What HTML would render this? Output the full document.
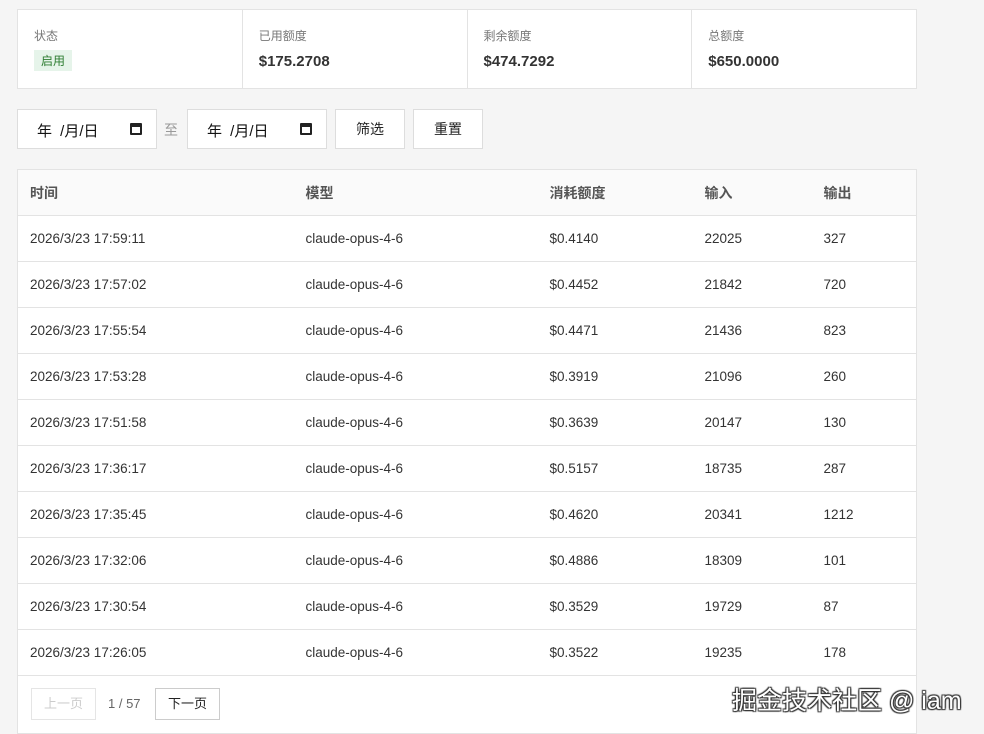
<!DOCTYPE html>
<html><head><meta charset="utf-8"><style>
*{box-sizing:border-box;margin:0;padding:0}
body{width:984px;height:734px;background:#f5f5f5;font-family:"Liberation Sans","Noto Sans CJK SC",sans-serif;color:#333;position:relative;overflow:hidden}
.stats{position:absolute;left:17px;top:9px;width:900px;height:80px;background:#fff;border:1px solid #e3e3e3;display:flex}
.stats>div{flex:1;border-right:1px solid #e3e3e3;padding:17px 16px}
.stats>div:last-child{border-right:none}
.lbl{font-size:12px;color:#777}
.val{font-size:15px;font-weight:bold;color:#333;margin-top:9px}
.badge{display:inline-block;margin-top:6px;background:#e6f4ea;color:#2e7d32;font-size:12px;padding:2px 7px}
.inp{position:absolute;top:109px;height:40px;background:#fff;border:1px solid #ddd;font-size:15px;color:#111;padding:10px 0 0 19px;word-spacing:4px}
.inp .cal{position:absolute;right:14px;top:13px;width:12px;height:12px;border:2px solid #222;border-top-width:4px;border-radius:1px}
.btn{position:absolute;top:109px;height:40px;background:#fff;border:1px solid #ddd;font-size:14px;text-align:center;line-height:38px;color:#222}
table{position:absolute;left:17px;top:169px;width:900px;border-collapse:collapse;background:#fff;border:1px solid #e3e3e3;font-size:13.5px}
th{background:#fafafa;height:46px;text-align:left;font-weight:bold;color:#555;font-size:14px;border-bottom:1px solid #e3e3e3}
td{height:46px;border-bottom:1px solid #e3e3e3;color:#333}
th,td{padding-left:12px}
.foot{position:absolute;left:17px;top:676px;width:900px;height:58px;background:#fff;border:1px solid #e3e3e3;border-top:none}
.pb{position:absolute;top:12px;height:32px;border:1px solid #ccc;font-size:13px;line-height:30px;text-align:center;background:#fff}
.wm{position:absolute;left:732px;top:681px;font-size:25px;color:#fff;text-shadow:0 0 1px #333,1px 1px 1px #333,-1px -1px 1px #333,1px -1px 1px #333,-1px 1px 1px #333}
</style></head><body>
<div class="stats">
<div><div class="lbl">状态</div><span class="badge">启用</span></div>
<div><div class="lbl">已用额度</div><div class="val">$175.2708</div></div>
<div><div class="lbl">剩余额度</div><div class="val">$474.7292</div></div>
<div><div class="lbl">总额度</div><div class="val">$650.0000</div></div>
</div>
<div class="inp" style="left:17px;width:140px">年 /月/日<span class="cal"></span></div>
<div style="position:absolute;left:164px;top:120px;font-size:14px;color:#999">至</div>
<div class="inp" style="left:187px;width:140px">年 /月/日<span class="cal"></span></div>
<div class="btn" style="left:335px;width:70px">筛选</div>
<div class="btn" style="left:413px;width:70px">重置</div>
<table>
<tr><th style="width:276px">时间</th><th style="width:244px">模型</th><th style="width:155px">消耗额度</th><th style="width:119px">输入</th><th>输出</th></tr>
<tr><td>2026/3/23 17:59:11</td><td>claude-opus-4-6</td><td>$0.4140</td><td>22025</td><td>327</td></tr>
<tr><td>2026/3/23 17:57:02</td><td>claude-opus-4-6</td><td>$0.4452</td><td>21842</td><td>720</td></tr>
<tr><td>2026/3/23 17:55:54</td><td>claude-opus-4-6</td><td>$0.4471</td><td>21436</td><td>823</td></tr>
<tr><td>2026/3/23 17:53:28</td><td>claude-opus-4-6</td><td>$0.3919</td><td>21096</td><td>260</td></tr>
<tr><td>2026/3/23 17:51:58</td><td>claude-opus-4-6</td><td>$0.3639</td><td>20147</td><td>130</td></tr>
<tr><td>2026/3/23 17:36:17</td><td>claude-opus-4-6</td><td>$0.5157</td><td>18735</td><td>287</td></tr>
<tr><td>2026/3/23 17:35:45</td><td>claude-opus-4-6</td><td>$0.4620</td><td>20341</td><td>1212</td></tr>
<tr><td>2026/3/23 17:32:06</td><td>claude-opus-4-6</td><td>$0.4886</td><td>18309</td><td>101</td></tr>
<tr><td>2026/3/23 17:30:54</td><td>claude-opus-4-6</td><td>$0.3529</td><td>19729</td><td>87</td></tr>
<tr><td>2026/3/23 17:26:05</td><td>claude-opus-4-6</td><td>$0.3522</td><td>19235</td><td>178</td></tr>
</table>
<div class="foot">
<div class="pb" style="left:13px;width:65px;color:#ccc;border-color:#e5e5e5">上一页</div>
<div style="position:absolute;left:90px;top:20px;font-size:13px;color:#666">1 / 57</div>
<div class="pb" style="left:137px;width:65px;color:#222">下一页</div>
</div>
<div class="wm">掘金技术社区 @ iam</div>
</body></html>
